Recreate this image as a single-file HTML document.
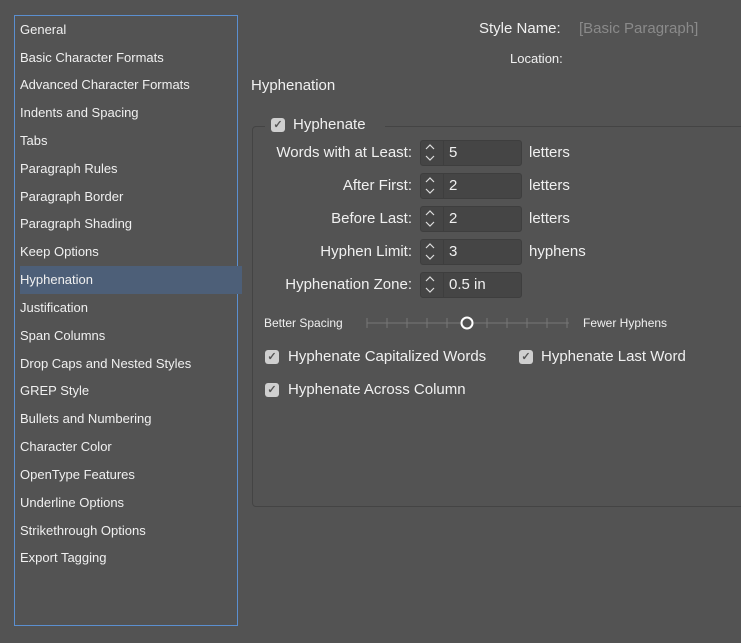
<!DOCTYPE html>
<html><head><style>
body{margin:0;width:741px;height:643px;background:#535353;font-family:"Liberation Sans",sans-serif;color:#f0f0f0;position:relative;overflow:hidden}
.a{position:absolute;white-space:nowrap}
#list{position:absolute;left:14px;top:15px;width:222px;height:609px;border:1px solid #5b8fd0;}
#list div{position:absolute;left:5px;font-size:13px;height:28px;line-height:28px;}
#sel{position:absolute;left:0;top:250px;width:222px;height:28px;background:#4d5f78}
.lbl{font-size:15px;text-align:right;width:160px;left:252px}
.inp{position:absolute;left:420px;width:100px;height:24px;border:1px solid #3e3e3e;background:#454545;border-radius:3px}
.inp .sp{position:absolute;left:0;top:0;width:22px;height:24px;border-right:1px solid #3e3e3e}
.inp .v{position:absolute;left:28px;top:3px;font-size:15px}
.unit{font-size:15px;left:529px}
.cb{position:absolute;width:14px;height:14px;background:#cfcfcf;border-radius:3px;color:#555;font-size:11px;line-height:14px;text-align:center;font-weight:bold}
</style></head><body>
<div id="list"><div id="sel"></div>
<div style="top:0">General</div><div style="top:28px">Basic Character Formats</div><div style="top:55px">Advanced Character Formats</div><div style="top:83px">Indents and Spacing</div><div style="top:111px">Tabs</div><div style="top:139px">Paragraph Rules</div><div style="top:167px">Paragraph Border</div><div style="top:194px">Paragraph Shading</div><div style="top:222px">Keep Options</div><div style="top:250px">Hyphenation</div><div style="top:278px">Justification</div><div style="top:306px">Span Columns</div><div style="top:334px">Drop Caps and Nested Styles</div><div style="top:361px">GREP Style</div><div style="top:389px">Bullets and Numbering</div><div style="top:417px">Character Color</div><div style="top:445px">OpenType Features</div><div style="top:473px">Underline Options</div><div style="top:501px">Strikethrough Options</div><div style="top:528px">Export Tagging</div>
</div>
<div class="a" style="left:479px;top:20px;font-size:15px">Style Name:</div>
<div class="a" style="left:579px;top:20px;font-size:15px;color:#8a8a8a">[Basic Paragraph]</div>
<div class="a" style="left:510px;top:51px;font-size:13px">Location:</div>
<div class="a" style="left:251px;top:77px;font-size:15px">Hyphenation</div>
<div style="position:absolute;left:252px;top:126px;width:495px;height:379px;border:1px solid #444;border-radius:4px"></div>
<div class="a" style="left:265px;top:116px;width:120px;height:20px;background:#535353"></div>
<div class="cb" style="left:271px;top:118px">✓</div>
<div class="a" style="left:293px;top:116px;font-size:15px">Hyphenate</div>

<div class="a lbl" style="top:144px">Words with at Least:</div><div class="inp" style="top:140px"><div class="sp"></div><div class="v">5</div></div><div class="a unit" style="top:144px">letters</div>
<div class="a lbl" style="top:177px">After First:</div><div class="inp" style="top:173px"><div class="sp"></div><div class="v">2</div></div><div class="a unit" style="top:177px">letters</div>
<div class="a lbl" style="top:210px">Before Last:</div><div class="inp" style="top:206px"><div class="sp"></div><div class="v">2</div></div><div class="a unit" style="top:210px">letters</div>
<div class="a lbl" style="top:243px">Hyphen Limit:</div><div class="inp" style="top:239px"><div class="sp"></div><div class="v">3</div></div><div class="a unit" style="top:243px">hyphens</div>
<div class="a lbl" style="top:276px">Hyphenation Zone:</div><div class="inp" style="top:272px"><div class="sp"></div><div class="v">0.5 in</div></div>
<svg class="a" style="left:420px;top:140px" width="22" height="160">
<g fill="none" stroke="#ddd" stroke-width="1.2"><path d="M6 9l4-4 4 4M6 16l4 4 4-4"/><path d="M6 42l4-4 4 4M6 49l4 4 4-4"/><path d="M6 75l4-4 4 4M6 82l4 4 4-4"/><path d="M6 108l4-4 4 4M6 115l4 4 4-4"/><path d="M6 141l4-4 4 4M6 148l4 4 4-4"/></g></svg>

<div class="a" style="left:264px;top:316px;font-size:12px">Better Spacing</div>
<svg class="a" style="left:365px;top:314px" width="206" height="18"><g stroke="#777" stroke-width="1"><path d="M2 9H204"/><path d="M2 4v10M22 4v10M42 4v10M62 4v10M82 4v10M122 4v10M142 4v10M162 4v10M182 4v10M202 4v10"/></g><circle cx="102" cy="9" r="5.5" fill="#535353" stroke="#fff" stroke-width="2"/></svg>
<div class="a" style="left:583px;top:316px;font-size:12px">Fewer Hyphens</div>
<div class="cb" style="left:265px;top:350px">✓</div><div class="a" style="left:288px;top:348px;font-size:15px">Hyphenate Capitalized Words</div>
<div class="cb" style="left:519px;top:350px">✓</div><div class="a" style="left:541px;top:348px;font-size:15px">Hyphenate Last Word</div>
<div class="cb" style="left:265px;top:383px">✓</div><div class="a" style="left:288px;top:381px;font-size:15px">Hyphenate Across Column</div>
</body></html>
